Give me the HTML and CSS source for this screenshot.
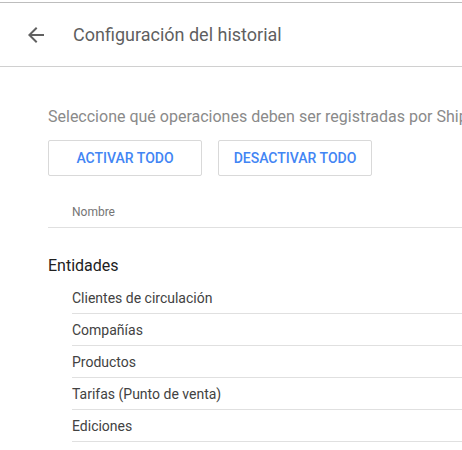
FILE: index.html
```html
<!DOCTYPE html>
<html lang="es">
<head>
<meta charset="utf-8">
<link rel="stylesheet" href="styles.css">
</head>
<body>
<div class="page">
  <header class="topbar">
    <svg class="back" width="24" height="24" viewBox="0 0 24 24"><path d="M20 11H7.83l5.59-5.59L12 4l-8 8 8 8 1.41-1.41L7.83 13H20v-2z" fill="#616161"/></svg>
    <h1 class="title">Configuración del historial</h1>
  </header>
  <main class="content">
    <p class="desc">Seleccione qué operaciones deben ser registradas por Shipping Manager</p>
    <div class="actions">
      <button class="btn">ACTIVAR TODO</button>
      <button class="btn">DESACTIVAR TODO</button>
    </div>
    <div class="colhead">Nombre</div>
    <h2 class="group">Entidades</h2>
    <ul class="list">
      <li>Clientes de circulación</li>
      <li>Compañías</li>
      <li>Productos</li>
      <li>Tarifas (Punto de venta)</li>
      <li>Ediciones</li>
    </ul>
  </main>
</div>
</body>
</html>
```
FILE: styles.css
```css
html, body { margin: 0; padding: 0; background: #fff; overflow: hidden; }
body { font-family: Roboto, "Liberation Sans", sans-serif; }
.page { width: 700px; padding-top: 2px; }
.topbar {
  border-top: 1px solid #bdbdbd;
  border-bottom: 1px solid #d0d0d0;
  height: 63px;
  display: flex;
  align-items: center;
  padding-left: 24px;
  box-sizing: content-box;
}
.back { flex: none; }
.title {
  margin: 0 0 0 25px;
  font-size: 18px;
  font-weight: 400;
  color: #5f5f5f;
}
.content { padding: 41px 0 0 48px; }
.desc {
  margin: 0;
  font-size: 16px;
  color: #8a8a8a;
  line-height: 18px;
  white-space: nowrap;
}
.actions { display: flex; gap: 16px; margin-top: 14px; }
.btn {
  width: 154px;
  height: 36px;
  background: #fff;
  border: 1px solid #d9d9d9;
  border-radius: 2px;
  font-family: Roboto, "Liberation Sans", sans-serif;
  font-size: 14px;
  font-weight: 500;
  color: #4285f4;
  padding: 0;
}
.colhead {
  margin-top: 21px;
  padding-left: 24px;
  height: 30px;
  line-height: 30px;
  font-size: 12px;
  color: #757575;
  border-bottom: 1px solid #e0e0e0;
}
.group {
  margin: 22px 0 0 0;
  font-size: 16px;
  font-weight: 400;
  color: #212121;
  line-height: 32px;
  height: 32px;
}
.list { list-style: none; margin: 0; padding: 0 0 0 24px; }
.list li {
  height: 31px;
  line-height: 32px;
  font-size: 14px;
  color: #424242;
  border-bottom: 1px solid #e0e0e0;
}
```
